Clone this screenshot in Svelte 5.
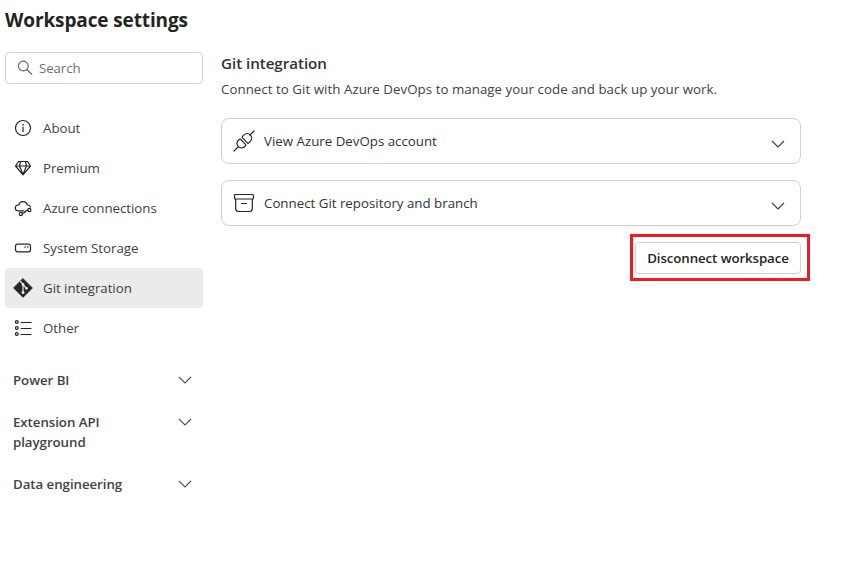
<script>
  const items = [
    { id: 'about', label: 'About' },
    { id: 'premium', label: 'Premium' },
    { id: 'azure', label: 'Azure connections' },
    { id: 'storage', label: 'System Storage' },
    { id: 'git', label: 'Git integration' },
    { id: 'other', label: 'Other' },
  ];
  const groups = ['Power BI', 'Extension API playground', 'Data engineering'];
  const cards = [
    { id: 'plug', label: 'View Azure DevOps account' },
    { id: 'archive', label: 'Connect Git repository and branch' },
  ];
  let selected = $state('git');
</script>

{#snippet chevron()}
  <svg class="chevron" width="14" height="8" viewBox="0 0 14 8"><path d="M1 1L7 7L13 1" /></svg>
{/snippet}

{#snippet icon(id)}
  <svg class="icon" width="20" height="20" viewBox="0 0 20 20">
    {#if id === 'about'}
      <circle cx="10" cy="10" r="7.5" />
      <path d="M10 9v4.5" />
      <circle class="solid" cx="10" cy="6.8" r=".5" />
    {:else if id === 'premium'}
      <path d="M5.5 3.5h9L17.5 8 10 16.8 2.5 8zM2.5 8h15M7.5 3.5L6.5 8 10 16.5 13.5 8l-1-4.5" />
    {:else if id === 'azure'}
      <path d="M11 12.8H5.2a2.9 2.9 0 0 1 0-5.8h.5a4.4 4.4 0 0 1 8.6 0h.5a2.9 2.9 0 0 1 2.7 2.2M9.4 15.3l1.7-.5 2.6-2.3 1.2-.2" />
      <circle cx="7.9" cy="16" r="1.6" />
      <circle cx="16.3" cy="12" r="1.6" />
    {:else if id === 'storage'}
      <rect x="2.5" y="6.2" width="15" height="7.6" rx="2" />
      <circle class="solid" cx="12" cy="9" r=".4" />
      <circle class="solid" cx="14.7" cy="9" r=".4" />
    {:else if id === 'git'}
      <path class="solid" d="M10 .5L19.5 10 10 19.5.5 10z" />
      <path class="light" d="M7.5 3.5L10 6.2v8.5M10 6.5l3.3 3.6" />
      <circle class="light-solid" cx="10" cy="6.5" r="1.4" />
      <circle class="light-solid" cx="10" cy="14.5" r="1.5" />
      <circle class="light-solid" cx="13.5" cy="10.3" r="1.4" />
    {:else}
      <circle cx="3.8" cy="4" r="1.4" />
      <circle cx="3.8" cy="10" r="1.4" />
      <circle cx="3.8" cy="16" r="1.4" />
      <path d="M8 4.5h10M8 10.5h10M8 16.5h10" />
    {/if}
  </svg>
{/snippet}

<div class="page">
  <h1>Workspace settings</h1>
  <div class="body">
    <aside>
      <label class="search">
        <svg width="16" height="16" viewBox="0 0 16 16"><circle cx="6.3" cy="6" r="4.9" /><path d="M9.9 9.5l5 5" /></svg>
        <input type="text" placeholder="Search" />
      </label>
      <nav>
        {#each items as item}
          <button class="item" class:active={selected === item.id} onclick={() => (selected = item.id)}>
            {@render icon(item.id)}
            <span>{item.label}</span>
          </button>
        {/each}
      </nav>
      <div class="groups">
        {#each groups as group}
          <button class="group"><span>{group}</span>{@render chevron()}</button>
        {/each}
      </div>
    </aside>
    <main>
      <h2>Git integration</h2>
      <p>Connect to Git with Azure DevOps to manage your code and back up your work.</p>
      {#each cards as card}
        <button class="card">
          <svg class="icon" width="22" height="22" viewBox="0 0 22 22">
            {#if card.id === 'plug'}
              <path d="M1 21l4.2-4.2M16.8 5.2L21 1M4.7 11.1l1.6-1.6q.7-.7 1.4 0l4.8 4.8q.7.7 0 1.4l-1.4 1.4a4.5 4.5 0 0 1-6.4-6zM9.5 6.3l1.4-1.4a4.5 4.5 0 0 1 6.4 6.4l-1.6 1.6q-.7.7-1.4 0L9.5 7.7q-.7-.7 0-1.4z" />
            {:else}
              <path d="M2.5 2.5h17q1 0 1 1v2.5q0 1-1 1h-17q-1 0-1-1V3.5q0-1 1-1zM2.7 7v9.5a3 3 0 0 0 3 3h10.6a3 3 0 0 0 3-3V7M8.5 11.5h5" />
            {/if}
          </svg>
          <span>{card.label}</span>
          {@render chevron()}
        </button>
      {/each}
      <div class="actions">
        <div class="marked"><button class="disconnect"><span>Disconnect workspace</span></button></div>
      </div>
    </main>
  </div>
</div>

<style>
  .page {
    box-sizing: border-box;
    width: 841px;
    height: 575px;
    padding: 4px 5px 0;
    background: #fff;
    color: #424242;
    font-family: 'Open Sans', 'Noto Sans', sans-serif;
    font-size: 13.3px;
    line-height: 20px;
    overflow: hidden;
  }
  h1, h2, p { margin: 0; }
  h1 { height: 48px; color: #242424; font-size: 19px; line-height: 32px; font-weight: 700; letter-spacing: -.12px; }
  .body { display: flex; gap: 18px; }
  aside { width: 198px; }
  button { box-sizing: border-box; font: inherit; color: inherit; border: 0; background: none; text-align: left; white-space: nowrap; }
  .search {
    box-sizing: border-box;
    display: flex;
    align-items: center;
    gap: 6px;
    height: 32px;
    padding: 0 11px;
    border: 1px solid #d1d1d1;
    border-radius: 4px;
  }
  .search input { width: 120px; padding: 0; border: 0; outline: 0; background: none; font: inherit; color: #424242; letter-spacing: -.1px; }
  .search input::placeholder { color: #707070; opacity: 1; }
  .search svg { fill: none; stroke: #616161; stroke-width: 1.1; }
  .icon { flex: none; fill: none; stroke: #242424; stroke-width: 1.2; stroke-linecap: round; stroke-linejoin: round; }
  .icon .solid { fill: #242424; stroke-width: .5; }
  .icon .light { stroke: #ebebeb; }
  .icon .light-solid { fill: #ebebeb; stroke: none; }
  nav { display: flex; flex-direction: column; margin-top: 24px; }
  .item { display: flex; align-items: center; gap: 10px; height: 40px; padding: 0 8px; border-radius: 4px; letter-spacing: -.03px; }
  .item.active { background: #ebebeb; }
  .groups { display: flex; flex-direction: column; gap: 2px; margin-top: 12px; }
  .group { display: flex; justify-content: space-between; align-items: flex-start; padding: 10px 11px 10px 8px; font-weight: 600; white-space: normal; letter-spacing: -.06px; }
  .group span { width: 130px; }
  .chevron { flex: none; fill: none; stroke: #505050; stroke-width: 1.1; }
  .group .chevron { margin-top: 6px; }
  main { width: 580px; }
  h2 { height: 24px; color: #323232; font-size: 15.2px; line-height: 22px; font-weight: 600; letter-spacing: -.06px; }
  p { margin: 3px 0 19px; color: #424242; white-space: nowrap; letter-spacing: .04px; }
  .card { display: flex; align-items: center; width: 100%; height: 46px; margin-bottom: 16px; padding: 0 15px 0 11px; border: 1px solid #d1d1d1; border-radius: 8px; color: #323232; }
  .card span { flex: 1; margin-left: 9px; }
  .card .chevron { margin-top: 5px; stroke: #424242; stroke-width: 1.2; }
  .actions { display: flex; justify-content: flex-end; }
  .marked { position: relative; }
  .marked::after { content: ''; position: absolute; inset: -8px -9px -7px -5px; border: 3px solid #ed1c24; pointer-events: none; }
  .disconnect { display: block; width: 166px; height: 32px; padding: 0; border: 1px solid #d1d1d1; border-radius: 4px; color: #242424; font-weight: 600; text-align: center; letter-spacing: -.1px; }
</style>
